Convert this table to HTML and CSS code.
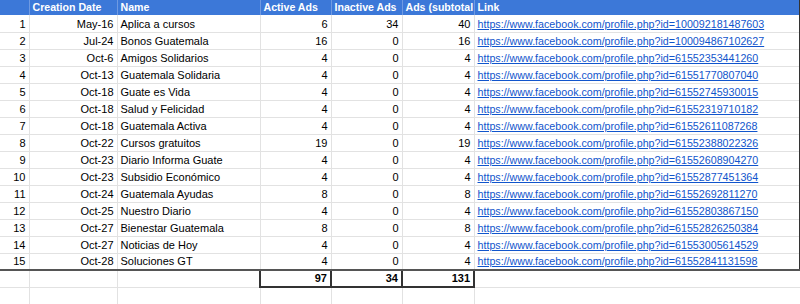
FILE: index.html
```html
<!DOCTYPE html>
<html>
<head>
<meta charset="utf-8">
<link rel="stylesheet" href="styles.css">
</head>
<body>
<table class="sheet">
  <colgroup>
    <col class="c-num"><col class="c-date"><col class="c-name"><col class="c-act"><col class="c-inact"><col class="c-sub"><col class="c-link">
  </colgroup>
  <thead>
    <tr class="head">
      <th></th><th>Creation Date</th><th>Name</th><th>Active Ads</th><th>Inactive Ads</th><th>Ads (subtotal</th><th class="last">Link</th>
    </tr>
  </thead>
  <tbody>
    <tr><td class="r">1</td><td class="r">May-16</td><td>Aplica a cursos</td><td class="r">6</td><td class="r">34</td><td class="r">40</td><td class="last"><a href="#">https://www.facebook.com/profile.php?id=100092181487603</a></td></tr>
    <tr><td class="r">2</td><td class="r">Jul-24</td><td>Bonos Guatemala</td><td class="r">16</td><td class="r">0</td><td class="r">16</td><td class="last"><a href="#">https://www.facebook.com/profile.php?id=100094867102627</a></td></tr>
    <tr><td class="r">3</td><td class="r">Oct-6</td><td>Amigos Solidarios</td><td class="r">4</td><td class="r">0</td><td class="r">4</td><td class="last"><a href="#">https://www.facebook.com/profile.php?id=61552353441260</a></td></tr>
    <tr><td class="r">4</td><td class="r">Oct-13</td><td>Guatemala Solidaria</td><td class="r">4</td><td class="r">0</td><td class="r">4</td><td class="last"><a href="#">https://www.facebook.com/profile.php?id=61551770807040</a></td></tr>
    <tr><td class="r">5</td><td class="r">Oct-18</td><td>Guate es Vida</td><td class="r">4</td><td class="r">0</td><td class="r">4</td><td class="last"><a href="#">https://www.facebook.com/profile.php?id=61552745930015</a></td></tr>
    <tr><td class="r">6</td><td class="r">Oct-18</td><td>Salud y Felicidad</td><td class="r">4</td><td class="r">0</td><td class="r">4</td><td class="last"><a href="#">https://www.facebook.com/profile.php?id=61552319710182</a></td></tr>
    <tr><td class="r">7</td><td class="r">Oct-18</td><td>Guatemala Activa</td><td class="r">4</td><td class="r">0</td><td class="r">4</td><td class="last"><a href="#">https://www.facebook.com/profile.php?id=61552611087268</a></td></tr>
    <tr><td class="r">8</td><td class="r">Oct-22</td><td>Cursos gratuitos</td><td class="r">19</td><td class="r">0</td><td class="r">19</td><td class="last"><a href="#">https://www.facebook.com/profile.php?id=61552388022326</a></td></tr>
    <tr><td class="r">9</td><td class="r">Oct-23</td><td>Diario Informa Guate</td><td class="r">4</td><td class="r">0</td><td class="r">4</td><td class="last"><a href="#">https://www.facebook.com/profile.php?id=61552608904270</a></td></tr>
    <tr><td class="r">10</td><td class="r">Oct-23</td><td>Subsidio Económico</td><td class="r">4</td><td class="r">0</td><td class="r">4</td><td class="last"><a href="#">https://www.facebook.com/profile.php?id=61552877451364</a></td></tr>
    <tr><td class="r">11</td><td class="r">Oct-24</td><td>Guatemala Ayudas</td><td class="r">8</td><td class="r">0</td><td class="r">8</td><td class="last"><a href="#">https://www.facebook.com/profile.php?id=61552692811270</a></td></tr>
    <tr><td class="r">12</td><td class="r">Oct-25</td><td>Nuestro Diario</td><td class="r">4</td><td class="r">0</td><td class="r">4</td><td class="last"><a href="#">https://www.facebook.com/profile.php?id=61552803867150</a></td></tr>
    <tr><td class="r">13</td><td class="r">Oct-27</td><td>Bienestar Guatemala</td><td class="r">8</td><td class="r">0</td><td class="r">8</td><td class="last"><a href="#">https://www.facebook.com/profile.php?id=61552826250384</a></td></tr>
    <tr><td class="r">14</td><td class="r">Oct-27</td><td>Noticias de Hoy</td><td class="r">4</td><td class="r">0</td><td class="r">4</td><td class="last"><a href="#">https://www.facebook.com/profile.php?id=61553005614529</a></td></tr>
    <tr class="lastrow"><td class="r">15</td><td class="r">Oct-28</td><td>Soluciones GT</td><td class="r">4</td><td class="r">0</td><td class="r">4</td><td class="last"><a href="#">https://www.facebook.com/profile.php?id=61552841131598</a></td></tr>
    <tr class="totals"><td></td><td></td><td></td><td class="r tot">97</td><td class="r tot">34</td><td class="r tot">131</td><td></td></tr>
    <tr class="empty"><td></td><td></td><td></td><td></td><td></td><td></td><td></td></tr>
  </tbody>
</table>
</body>
</html>
```

FILE: styles.css
```css
html, body {
  margin: 0;
  padding: 0;
  background: #ffffff;
  overflow: hidden;
}
body {
  width: 800px;
  height: 304px;
  font-family: "Liberation Sans", Arial, sans-serif;
  font-size: 11px;
  color: #000000;
}
.sheet {
  border-collapse: collapse;
  table-layout: fixed;
  width: 800px;
}
.c-num { width: 29px; }
.c-date { width: 88px; }
.c-name { width: 143px; }
.c-act { width: 71px; }
.c-inact { width: 71px; }
.c-sub { width: 72px; }
.c-link { width: 326px; }
.sheet th,
.sheet td {
  padding: 0 3px;
  white-space: nowrap;
  overflow: hidden;
  vertical-align: bottom;
  line-height: 13px;
  box-sizing: border-box;
}
.sheet td {
  height: 17px;
  border: 1px solid #e2e2e2;
  border-top: none;
  padding-bottom: 1px;
}
.sheet th {
  height: 15px;
  background: #3c78d8;
  color: #ffffff;
  font-weight: bold;
  font-size: 10.6px;
  text-align: left;
  border-left: 1px solid #6f9ae2;
  border-right: 1px solid #6f9ae2;
  padding: 0 1px 1px 3px;
}
.sheet th:first-child,
.sheet td:first-child {
  border-left: none;
}
.sheet .last {
  border-right: 2px solid #333333;
}
.sheet .r {
  text-align: right;
}
.sheet a {
  color: #1155cc;
  font-size: 10.7px;
  text-decoration: underline;
}
.lastrow td {
  border-bottom: 2px solid #555555;
}
.totals td.tot {
  border: 2px solid #333333;
  border-top: none;
  font-weight: bold;
}
.empty td {
  height: 17px;
}
```
